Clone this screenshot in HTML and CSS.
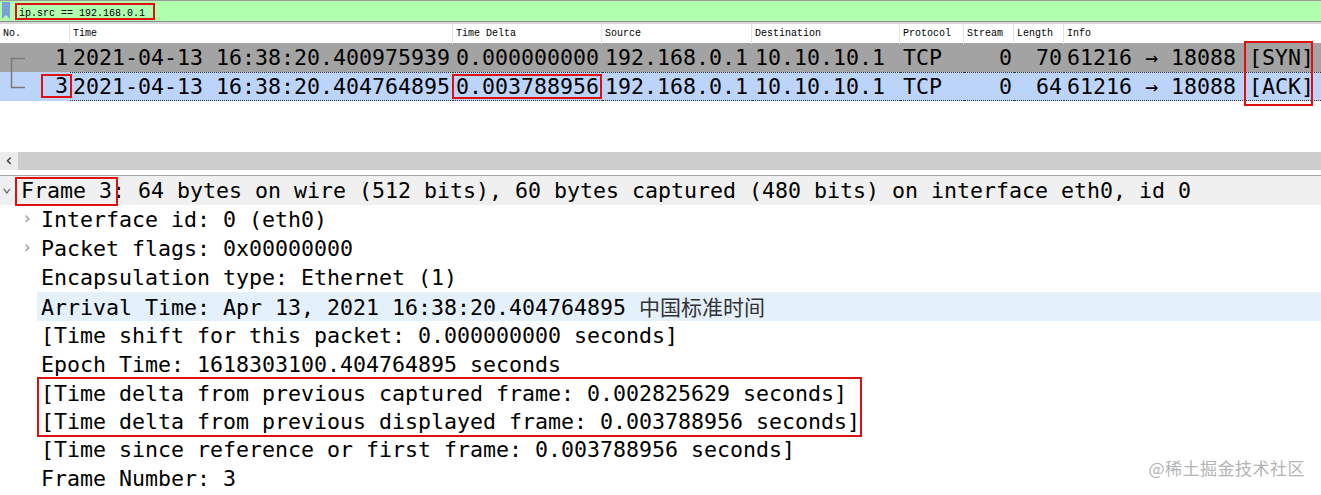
FILE: index.html
```html
<!DOCTYPE html>
<html>
<head>
<meta charset="utf-8">
<link rel="stylesheet" href="styles.css">
</head>
<body>
<div class="filter">
  <svg class="bm" width="9" height="18" viewBox="0 0 9 18"><path d="M0 0H8V17L4 13L0 17Z" fill="#7c9fd4"/></svg>
  <span class="ftext">ip.src == 192.168.0.1</span>
</div>
<div class="plist">
  <div class="grid hdr">
    <div class="c">No.</div>
    <div class="c">Time</div>
    <div class="c">Time Delta</div>
    <div class="c">Source</div>
    <div class="c">Destination</div>
    <div class="c">Protocol</div>
    <div class="c">Stream</div>
    <div class="c">Length</div>
    <div class="c last">Info</div>
  </div>
  <div class="grid row r1">
    <div class="c num">1</div>
    <div class="c">2021-04-13 16:38:20.400975939</div>
    <div class="c">0.000000000</div>
    <div class="c">192.168.0.1</div>
    <div class="c">10.10.10.1</div>
    <div class="c">TCP</div>
    <div class="c num">0</div>
    <div class="c num">70</div>
    <div class="c">61216 → 18088 [SYN]</div>
  </div>
  <div class="grid row r2">
    <div class="c num"><span class="box3">3</span></div>
    <div class="c focus">2021-04-13 16:38:20.404764895</div>
    <div class="c focus"><span class="boxd">0.003788956</span></div>
    <div class="c focus">192.168.0.1</div>
    <div class="c focus">10.10.10.1</div>
    <div class="c focus">TCP</div>
    <div class="c num focus">0</div>
    <div class="c num focus">64</div>
    <div class="c focus">61216 → 18088 [ACK]</div>
  </div>
  <svg class="tree" width="30" height="40" viewBox="0 0 30 40"><path d="M25 1.5H11.5V30.5H25" fill="none" stroke="#7a7a7a" stroke-width="1.5"/></svg>
  <div class="boxflag"></div>
</div>
<div class="hscroll"><div class="sbtn">‹</div><div class="strack"></div></div>
<div class="sep"></div>
<div class="details">
  <div class="line top"><span class="tw">⌄</span><span class="boxf">Frame 3:</span> 64 bytes on wire (512 bits), 60 bytes captured (480 bits) on interface eth0, id 0</div>
  <div class="line child"><span class="tc">›</span>Interface id: 0 (eth0)</div>
  <div class="line child"><span class="tc">›</span>Packet flags: 0x00000000</div>
  <div class="line child">Encapsulation type: Ethernet (1)</div>
  <div class="line child hl">Arrival Time: Apr 13, 2021 16:38:20.404764895 <span class="cjk">中国标准时间</span></div>
  <div class="line child">[Time shift for this packet: 0.000000000 seconds]</div>
  <div class="line child">Epoch Time: 1618303100.404764895 seconds</div>
  <div class="boxgrp">
    <div class="line">[Time delta from previous captured frame: 0.002825629 seconds]</div>
    <div class="line">[Time delta from previous displayed frame: 0.003788956 seconds]</div>
  </div>
  <div class="line child">[Time since reference or first frame: 0.003788956 seconds]</div>
  <div class="line child">Frame Number: 3</div>
</div>
<div class="watermark">@稀土掘金技术社区</div>
</body>
</html>
```

FILE: styles.css
```css
html, body {
  margin: 0;
  padding: 0;
  width: 1321px;
  height: 495px;
  overflow: hidden;
  background: #ffffff;
  position: relative;
}

.filter {
  height: 22px;
  box-sizing: border-box;
  background: #afffaf;
  border-top: 1px solid #9a9a9a;
  border-bottom: 1px solid #8a8a8a;
  display: flex;
  align-items: center;
  padding-left: 2px;
}

.bm {
  display: block;
  margin-right: 4px;
}

.ftext {
  font-family: "Liberation Mono", monospace;
  font-size: 10px;
  color: #000;
  border: 2px solid #e01010;
  height: 17px;
  line-height: 17px;
  box-sizing: border-box;
  width: 140px;
  padding-left: 2px;
  margin-top: 1px;
}

.plist {
  position: relative;
  height: 130px;
  border-top: 2px solid #d8d8d8;
  box-sizing: border-box;
}

.grid {
  display: grid;
  grid-template-columns: 70px 383px 149px 150px 148px 64px 50px 50px 257px;
}

.hdr {
  height: 19px;
  font-family: "Liberation Mono", monospace;
  font-size: 10px;
  line-height: 20px;
  color: #000;
}

.hdr .c {
  padding-left: 3px;
  border-right: 1px solid #e4e4e4;
}

.hdr .c.last {
  border-right: none;
}

.row {
  height: 29px;
  font-family: "DejaVu Sans Mono", monospace;
  font-size: 21.6px;
  line-height: 29px;
  color: #000;
}

.row .c {
  padding-left: 3px;
  white-space: nowrap;
  overflow: visible;
  position: relative;
}

.row .c.num {
  text-align: right;
  padding-left: 0;
  padding-right: 2px;
}

.r1 {
  background: #a3a3a3;
}

.r2 {
  background: #bdd4fa;
}

.r2 .focus {
  border-top: 1px dotted #333;
  border-bottom: 1px dotted #333;
  box-sizing: border-box;
  line-height: 27px;
}

.box3 {
  display: inline-block;
  border: 2px solid #e01010;
  width: 31px;
  height: 24px;
  box-sizing: border-box;
  line-height: 20px;
  text-align: right;
  margin-right: -4px;
  vertical-align: top;
  margin-top: 2px;
  padding-right: 2px;
}

.boxd {
  display: inline-block;
  border: 2px solid #e01010;
  height: 25px;
  line-height: 21px;
  box-sizing: border-box;
  margin-left: -4px;
  padding-left: 2px;
  width: 150px;
  vertical-align: top;
  margin-top: 1px;
}

.tree {
  position: absolute;
  left: 0;
  top: 33px;
}

.boxflag {
  position: absolute;
  left: 1244px;
  top: 17px;
  width: 69px;
  height: 65px;
  border: 2px solid #e01010;
  box-sizing: border-box;
}

.hscroll {
  height: 18px;
  display: flex;
  background: #cdcdcd;
}

.sbtn {
  width: 18px;
  background: #ececec;
  font-family: "DejaVu Sans", sans-serif;
  font-size: 17px;
  line-height: 16px;
  text-align: center;
  color: #333;
}

.strack {
  flex: 1;
}

.sep {
  height: 6px;
  box-sizing: border-box;
  border-top: 2px solid #ffffff;
  border-bottom: 1px solid #a8a8a8;
  background: #ffffff;
}

.details {
  font-family: "DejaVu Sans Mono", monospace;
  font-size: 21.6px;
  color: #000;
}

.line {
  height: 29px;
  line-height: 29px;
  white-space: nowrap;
  position: relative;
}

.line.top {
  background: #f0f0f0;
  padding-left: 21px;
}

.line.child {
  padding-left: 41px;
}

.line.hl {
  background: #e4f0fa;
  margin-left: 37px;
  padding-left: 4px;
}

.tw {
  position: absolute;
  left: 2px;
  top: -4px;
  font-size: 16px;
  color: #555;
}

.tc {
  position: absolute;
  left: 22px;
  top: -1px;
  font-size: 17px;
  color: #999;
}

.boxf {
  position: relative;
}

.boxf::after {
  content: "";
  position: absolute;
  left: -6px;
  top: -1px;
  width: 103px;
  height: 29px;
  border: 2px solid #e01010;
  box-sizing: border-box;
}

.cjk {
  font-family: "Noto Sans CJK SC", sans-serif;
  font-size: 21px;
  color: #333;
}

.boxgrp {
  margin-left: 37px;
  width: 825px;
  border: 2px solid #e01010;
  box-sizing: border-box;
  margin-top: -2px;
  margin-bottom: -2px;
  position: relative;
}

.boxgrp .line {
  padding-left: 2px;
  height: 28px;
}

.watermark {
  position: absolute;
  right: 16px;
  bottom: 15px;
  font-family: "Noto Sans CJK SC", sans-serif;
  font-size: 17px;
  color: #b4b4b4;
  letter-spacing: 0.5px;
}
```
